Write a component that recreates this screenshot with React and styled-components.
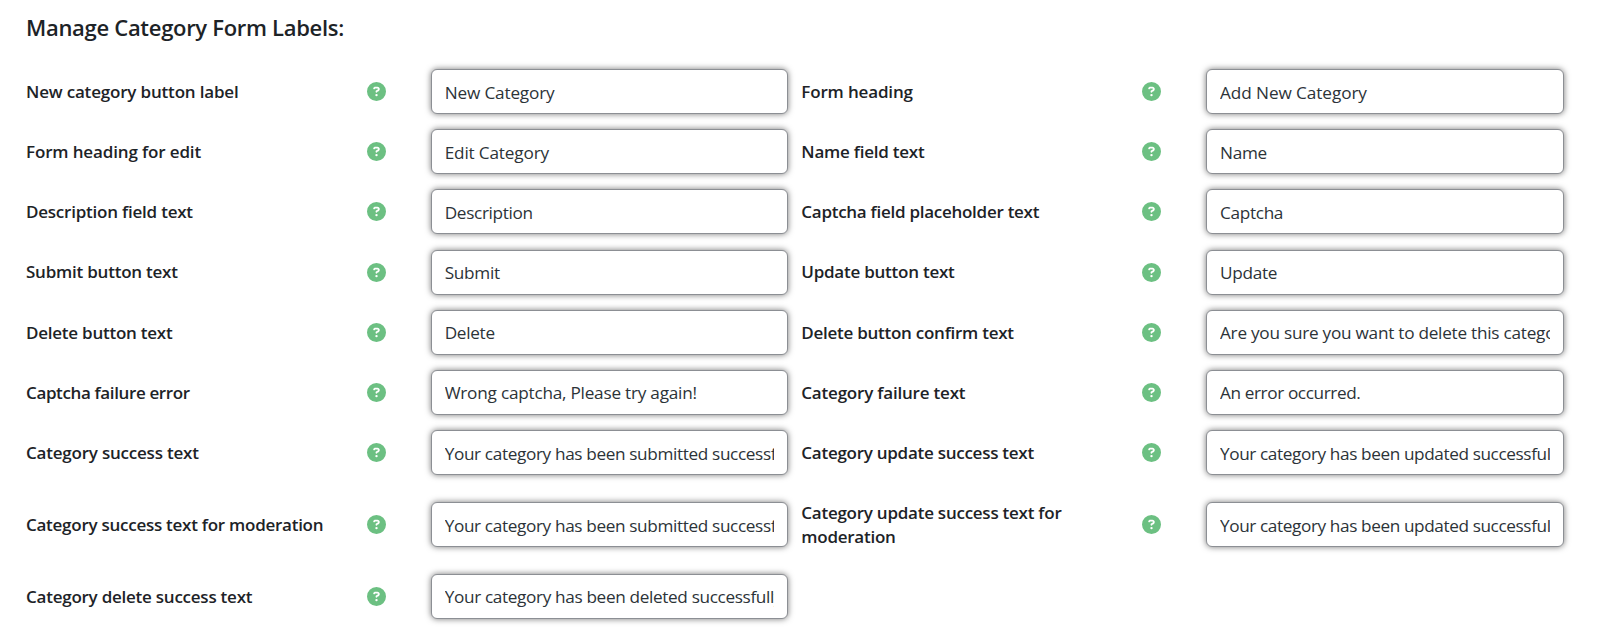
import React from "react";
import styled, { createGlobalStyle } from "styled-components";
import { FaCircleQuestion } from "react-icons/fa6";

const GlobalStyle = createGlobalStyle`
  *, *::before, *::after { box-sizing: border-box; }
  body {
    margin: 0;
    background: #fff;
    color: #1d2327;
    font-family: "Open Sans", "Noto Sans", sans-serif;
  }
`;

const Panel = styled.main`
  width: 1600px;
  height: 640px;
  padding: 11px 0 0 26px;
  overflow: hidden;
`;

const Heading = styled.h2`
  height: 50.45px;
  margin: 0;
  font-size: 22px;
  font-weight: 600;
  line-height: 32px;
  letter-spacing: -0.3px;
`;

const Row = styled.div`
  display: grid;
  grid-template-columns: repeat(2, 775.3px);
  height: ${(p) => (p.$tall ? 83.6 : 60.2)}px;
`;

const Field = styled.div`
  display: grid;
  grid-template-columns: 340.9px 64px 357.4px;
  align-items: center;
`;

const Label = styled.label`
  font-size: 17px;
  font-weight: 600;
  line-height: 23.3px;
  letter-spacing: ${(p) => p.$track - 0.03}px;
  white-space: pre-line;
`;

const Help = styled.span`
  display: flex;
  color: #6cc082;

  svg {
    width: 19px;
    height: 19px;
  }
`;

const TextInput = styled.input`
  width: 100%;
  height: 45px;
  padding: 1px 13px 0 12.8px;
  border: 1px solid #8c8f94;
  border-radius: 6px;
  background: #fff;
  box-shadow: 0 0 6px #777;
  color: #2c3338;
  font-family: inherit;
  font-size: 17.2px;
  letter-spacing: ${(p) => p.$track}px;
  outline: none;
`;

const rows = [
  [
    ["New category button label", -0.15, "New Category", -0.17],
    ["Form heading", -0.13, "Add New Category", -0.08],
  ],
  [
    ["Form heading for edit", -0.11, "Edit Category", -0.17],
    ["Name field text", -0.2, "Name", -0.26],
  ],
  [
    ["Description field text", -0.19, "Description", -0.33],
    ["Captcha field placeholder text", -0.24, "Captcha", -0.32],
  ],
  [
    ["Submit button text", -0.2, "Submit", -0.29],
    ["Update button text", -0.21, "Update", -0.3],
  ],
  [
    ["Delete button text", -0.21, "Delete", -0.3],
    ["Delete button confirm text", -0.23, "Are you sure you want to delete this category?", -0.25],
  ],
  [
    ["Captcha failure error", -0.34, "Wrong captcha, Please try again!", -0.23],
    ["Category failure text", -0.17, "An error occurred.", -0.39],
  ],
  [
    ["Category success text", -0.18, "Your category has been submitted successfully.", -0.36],
    ["Category update success text", -0.23, "Your category has been updated successfully.", -0.39],
  ],
  [
    ["Category success text for moderation", -0.23, "Your category has been submitted successfully.", -0.36],
    ["Category update success text for\nmoderation", -0.22, "Your category has been updated successfully.", -0.39],
  ],
  [["Category delete success text", -0.21, "Your category has been deleted successfully.", -0.35]],
];

export default function App() {
  return (
    <>
      <GlobalStyle />
      <Panel>
        <Heading>Manage Category Form Labels:</Heading>
        {rows.map((fields, r) => (
          <Row key={r} $tall={r === 7}>
            {fields.map(([label, labelTrack, value, valueTrack], c) => (
              <Field key={label}>
                <Label htmlFor={`field-${r}-${c}`} $track={labelTrack}>{label}</Label>
                <Help><FaCircleQuestion /></Help>
                <TextInput id={`field-${r}-${c}`} defaultValue={value} $track={valueTrack} />
              </Field>
            ))}
          </Row>
        ))}
      </Panel>
    </>
  );
}
